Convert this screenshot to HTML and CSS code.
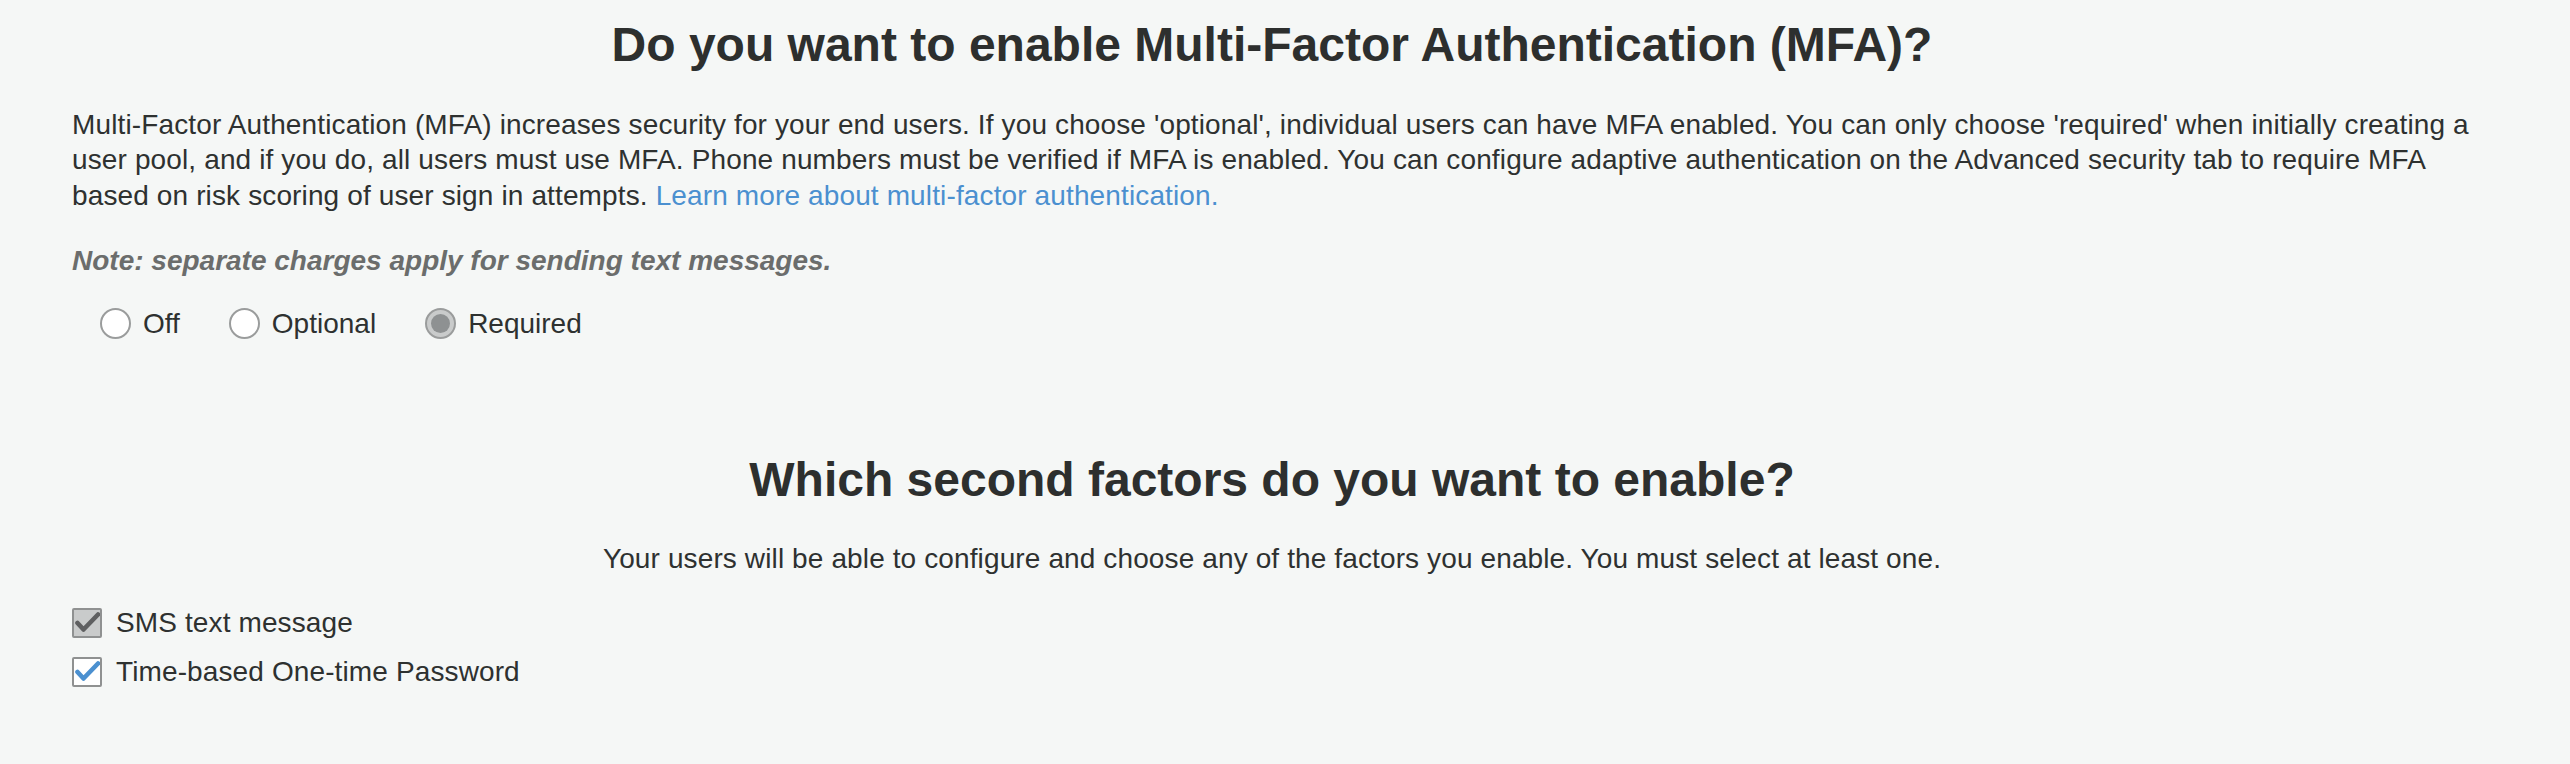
FILE: index.html
```html
<!DOCTYPE html>
<html lang="en">
<head>
<meta charset="utf-8">
<title>MFA settings</title>
<link rel="stylesheet" href="styles.css">
</head>
<body>
<main class="page">
  <section class="section">
    <h1 class="title">Do you want to enable Multi-Factor Authentication (MFA)?</h1>
    <p class="desc">Multi-Factor Authentication (MFA) increases security for your end users. If you choose 'optional', individual users can have MFA enabled. You can only choose 'required' when initially creating a user pool, and if you do, all users must use MFA. Phone numbers must be verified if MFA is enabled. You can configure adaptive authentication on the Advanced security tab to require MFA based on risk scoring of user sign in attempts. <a class="link" href="#">Learn more about multi-factor authentication.</a></p>
    <p class="note">Note: separate charges apply for sending text messages.</p>
    <div class="radios">
      <label class="option"><span class="radio"></span><span class="label">Off</span></label>
      <label class="option"><span class="radio"></span><span class="label">Optional</span></label>
      <label class="option"><span class="radio radio-on"><span class="dot"></span></span><span class="label">Required</span></label>
    </div>
  </section>
  <section class="section second">
    <h2 class="title">Which second factors do you want to enable?</h2>
    <p class="sub">Your users will be able to configure and choose any of the factors you enable. You must select at least one.</p>
    <div class="checks">
      <label class="check-row">
        <span class="box box-disabled"><svg class="tick" viewBox="0 0 26 26" width="26" height="26"><path d="M3.5 13 L9.5 19.5 L24 4.5" fill="none" stroke="#5f6061" stroke-width="4.6" stroke-linecap="round" stroke-linejoin="round"/></svg></span>
        <span class="label">SMS text message</span>
      </label>
      <label class="check-row">
        <span class="box"><svg class="tick" viewBox="0 0 26 26" width="26" height="26"><path d="M3.5 13 L9.5 19.5 L24 4.5" fill="none" stroke="#4b90d0" stroke-width="4.6" stroke-linecap="round" stroke-linejoin="round"/></svg></span>
        <span class="label">Time-based One-time Password</span>
      </label>
    </div>
  </section>
</main>
</body>
</html>
```
FILE: styles.css
```css
html, body {
  margin: 0;
  padding: 0;
  background: #f5f7f6;
}
body {
  font-family: "Liberation Sans", Arial, Helvetica, sans-serif;
  color: #2e3130;
}
.page {
  width: 2400px;
  padding: 17px 0 0 72px;
  box-sizing: content-box;
}
.section {
  display: flex;
  flex-direction: column;
}
.title {
  margin: 0;
  font-size: 48px;
  line-height: 56px;
  font-weight: 700;
  text-align: center;
  color: #2d2f2e;
}
.desc {
  margin: 34px 0 0;
  font-size: 28px;
  line-height: 35.4px;
  letter-spacing: 0.13px;
}
.link {
  color: #4b90d0;
  text-decoration: none;
}
.note {
  margin: 30px 0 0;
  font-size: 28px;
  line-height: 35px;
  font-weight: 700;
  font-style: italic;
  color: #6b6d6c;
}
.radios {
  display: flex;
  align-items: center;
  margin-top: 28px;
  padding-left: 28px;
  gap: 49px;
}
.option {
  display: flex;
  align-items: center;
  gap: 12px;
  font-size: 28px;
  line-height: 35px;
}
.radio {
  width: 31px;
  height: 31px;
  box-sizing: border-box;
  border: 2px solid #9a9c9c;
  border-radius: 50%;
  background: #ffffff;
  display: flex;
  align-items: center;
  justify-content: center;
}
.radio-on {
  background: #c9cbcb;
}
.dot {
  width: 19px;
  height: 19px;
  border-radius: 50%;
  background: #8e9192;
}
.second {
  margin-top: 111px;
}
.sub {
  margin: 33px 0 0;
  font-size: 28px;
  line-height: 35px;
  letter-spacing: 0.12px;
  text-align: center;
}
.checks {
  display: flex;
  flex-direction: column;
  gap: 14px;
  margin-top: 29px;
}
.check-row {
  display: flex;
  align-items: center;
  gap: 14px;
  font-size: 28px;
  line-height: 35px;
  letter-spacing: 0.12px;
}
.box {
  width: 30px;
  height: 30px;
  box-sizing: border-box;
  border: 2px solid #8f9191;
  border-radius: 2px;
  background: #ffffff;
  display: flex;
  overflow: hidden;
}
.box-disabled {
  background: #c9cbcb;
}
.tick {
  display: block;
}
```
